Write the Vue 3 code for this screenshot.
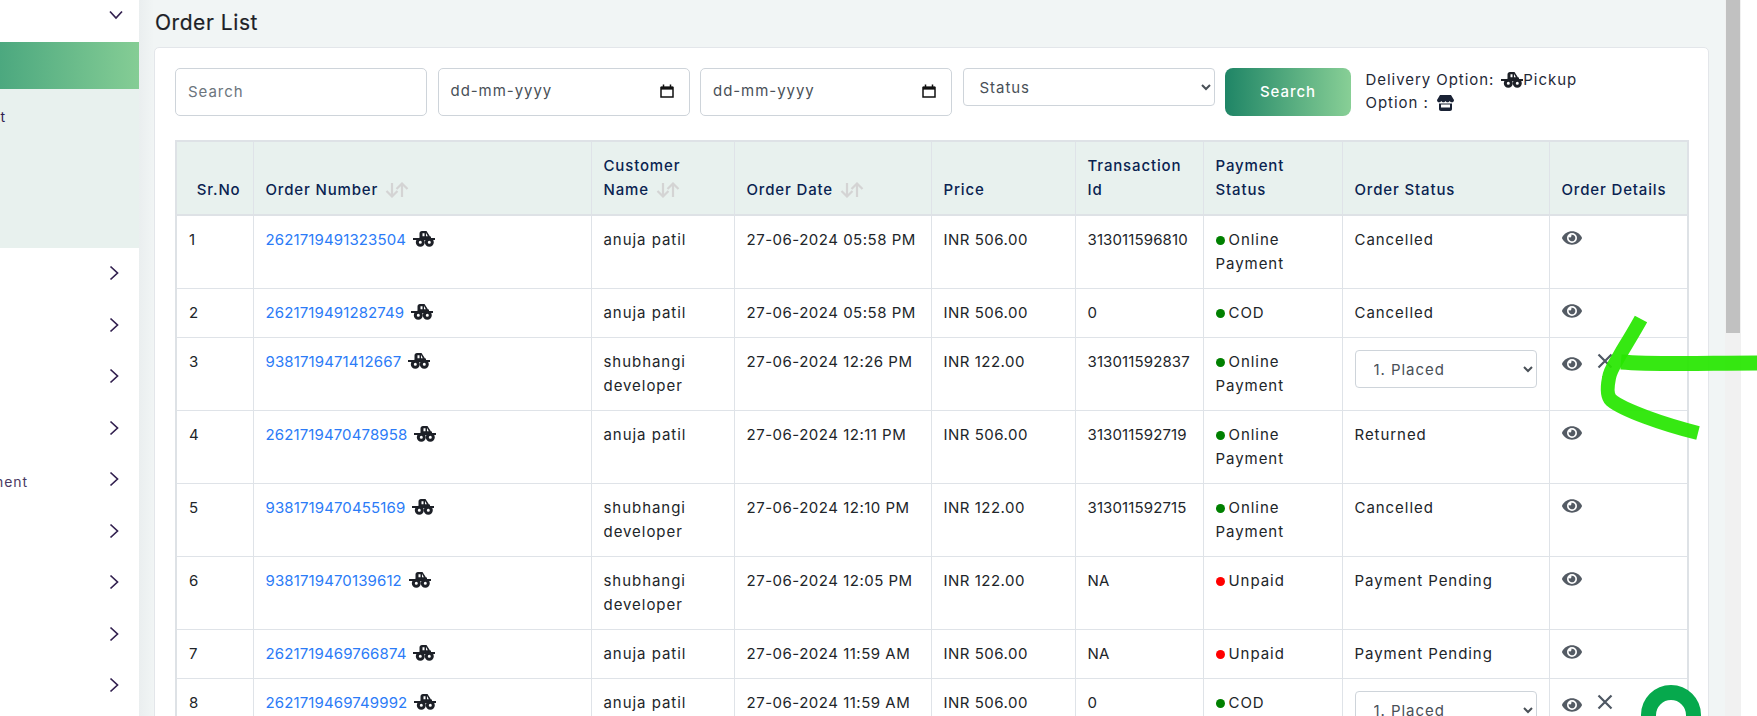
<script setup>
const eye = 'M572.52 241.4C518.29 135.59 410.93 64 288 64S57.68 135.64 3.48 241.41a32.35 32.35 0 0 0 0 29.19C57.71 376.41 165.07 448 288 448s230.32-71.64 284.52-177.41a32.35 32.35 0 0 0 0-29.19zM288 400a144 144 0 1 1 144-144 143.93 143.93 0 0 1-144 144zm0-240a95.31 95.31 0 0 0-25.31 3.79 47.85 47.85 0 0 1-66.9 66.9A95.78 95.78 0 1 0 288 160z'
const menuItems = [
  { label: '' }, { label: '' }, { label: '' }, { label: '' },
  { label: 'Inventory Management' },
  { label: '' }, { label: '' }, { label: '' }, { label: '' }
]
const anuja = ['anuja patil']
const shubh = ['shubhangi', 'developer']
const online = ['Online', 'Payment']
const rows = [
  { no: 1, id: '2621719491323504', name: anuja, date: '27-06-2024 05:58 PM', price: 'INR 506.00', tx: '313011596810', dot: 'green', pay: online, status: 'Cancelled' },
  { no: 2, id: '2621719491282749', name: anuja, date: '27-06-2024 05:58 PM', price: 'INR 506.00', tx: '0', dot: 'green', pay: ['COD'], status: 'Cancelled' },
  { no: 3, id: '9381719471412667', name: shubh, date: '27-06-2024 12:26 PM', price: 'INR 122.00', tx: '313011592837', dot: 'green', pay: online, status: '', edit: true },
  { no: 4, id: '2621719470478958', name: anuja, date: '27-06-2024 12:11 PM', price: 'INR 506.00', tx: '313011592719', dot: 'green', pay: online, status: 'Returned' },
  { no: 5, id: '9381719470455169', name: shubh, date: '27-06-2024 12:10 PM', price: 'INR 122.00', tx: '313011592715', dot: 'green', pay: online, status: 'Cancelled' },
  { no: 6, id: '9381719470139612', name: shubh, date: '27-06-2024 12:05 PM', price: 'INR 122.00', tx: 'NA', dot: 'red', pay: ['Unpaid'], status: 'Payment Pending' },
  { no: 7, id: '2621719469766874', name: anuja, date: '27-06-2024 11:59 AM', price: 'INR 506.00', tx: 'NA', dot: 'red', pay: ['Unpaid'], status: 'Payment Pending' },
  { no: 8, id: '2621719469749992', name: anuja, date: '27-06-2024 11:59 AM', price: 'INR 506.00', tx: '0', dot: 'green', pay: ['COD'], status: '', edit: true }
]
</script>

<template>
  <div class="app">
    <svg width="0" height="0" class="defs">
      <symbol id="truck" viewBox="0 0 22 16">
        <path d="M6.500 7V2.500C6.500 1 7.500 0 9 0H13.500L17 5.500H18V7H6.500Z M9.500 2.200V5.200H11.500V2.200Z M13 2.200V5.200H14.800L13.200 2.200Z" fill="#1d2027" fill-rule="evenodd" />
        <rect x="0" y="7" width="22" height="2" fill="#1d2027" />
        <circle cx="7.300" cy="11.300" r="3" fill="#fff" stroke="#1d2027" stroke-width="3" />
        <circle cx="16.300" cy="11.300" r="3" fill="#fff" stroke="#1d2027" stroke-width="3" />
      </symbol>
      <symbol id="sort" viewBox="0 0 24 16">
        <path d="M7 1V14M1.500 9L7 14.500L12.500 9" fill="none" stroke="#d4d4d4" stroke-width="2.200" />
        <path d="M17 15V2M11.500 7L17 1.500L22.500 7" fill="none" stroke="#d4d4d4" stroke-width="2.200" />
      </symbol>
      <symbol id="eye" viewBox="0 0 576 512"><path :d="eye" fill="#545b64" /></symbol>
    </svg>

    <aside class="sidebar">
      <div class="side-top">
        <svg class="chev-down" width="14" height="10" viewBox="0 0 14 10"><path d="M1 1.500L7 8L13 1.500" fill="none" stroke="#32204f" stroke-width="1.700" /></svg>
      </div>
      <div class="side-active"></div>
      <div class="side-sub"><span class="clip clip-a">Order List</span></div>
      <div v-for="(m, i) in menuItems" :key="i" class="side-item">
        <span v-if="m.label" class="clip clip-b">{{ m.label }}</span>
        <svg class="chev" width="10" height="15" viewBox="0 0 10 15"><path d="M1.500 1L8.500 7.500L1.500 14" fill="none" stroke="#32204f" stroke-width="1.700" /></svg>
      </div>
    </aside>

    <main class="main">
      <h1 class="title">Order List</h1>
      <section class="card">
        <div class="filters">
          <input class="field" type="text" placeholder="Search" />
          <div class="field date"><span>dd-mm-yyyy</span>
            <svg width="14" height="14" viewBox="0 0 14 14"><path d="M1 3.500H13V13H1Z M1 4.500H13" fill="none" stroke="#111" stroke-width="1.500" /><path d="M1 2.500H13V5.500H1Z" fill="#111" /><path d="M3.500 0.500V3M10.500 0.500V3" stroke="#111" stroke-width="1.500" /></svg>
          </div>
          <div class="field date"><span>dd-mm-yyyy</span>
            <svg width="14" height="14" viewBox="0 0 14 14"><path d="M1 3.500H13V13H1Z M1 4.500H13" fill="none" stroke="#111" stroke-width="1.500" /><path d="M1 2.500H13V5.500H1Z" fill="#111" /><path d="M3.500 0.500V3M10.500 0.500V3" stroke="#111" stroke-width="1.500" /></svg>
          </div>
          <select class="status"><option>Status</option></select>
          <button class="search" type="button">Search</button>
          <div class="info">
            <div class="info-line">Delivery Option:<svg class="truck info-truck" width="22" height="16"><use href="#truck" /></svg>Pickup</div>
            <div class="info-line">Option :
              <svg class="store" width="17" height="16" viewBox="0 0 17 16">
                <path d="M3 0H14L17 5C17 6.500 16 7.300 14.900 7.300C13.900 7.300 13.200 6.800 12.700 6C12.200 6.800 11.400 7.300 10.600 7.300C9.700 7.300 9 6.800 8.500 6C8 6.800 7.300 7.300 6.400 7.300C5.600 7.300 4.800 6.800 4.300 6C3.800 6.800 3.100 7.300 2.100 7.300C1 7.300 0 6.500 0 5Z" fill="#1a2235" />
                <path d="M2 8.500H15V14C15 15.200 14.200 16 13 16H4C2.800 16 2 15.200 2 14ZM4 9.500V12.500H13V9.500Z" fill="#1a2235" fill-rule="evenodd" />
              </svg>
            </div>
          </div>
        </div>

        <table class="orders">
          <colgroup>
            <col style="width:77px" /><col style="width:338px" /><col style="width:143px" />
            <col style="width:197px" /><col style="width:144px" /><col style="width:128px" />
            <col style="width:139px" /><col style="width:207px" /><col style="width:139px" />
          </colgroup>
          <thead>
            <tr>
              <th class="sr">Sr.No</th>
              <th>Order Number <svg class="sort" width="24" height="16"><use href="#sort" /></svg></th>
              <th>Customer<br />Name <svg class="sort" width="24" height="16"><use href="#sort" /></svg></th>
              <th>Order Date <svg class="sort" width="24" height="16"><use href="#sort" /></svg></th>
              <th>Price</th>
              <th>Transaction<br />Id</th>
              <th>Payment<br />Status</th>
              <th>Order Status</th>
              <th>Order Details</th>
            </tr>
          </thead>
          <tbody>
            <tr v-for="r in rows" :key="r.no">
              <td class="digits">{{ r.no }}</td>
              <td><a class="link digits">{{ r.id }}</a><svg class="truck" width="22" height="16"><use href="#truck" /></svg></td>
              <td><span v-for="n in r.name" :key="n" class="ln">{{ n }}</span></td>
              <td class="mixed">{{ r.date }}</td>
              <td class="mixed">{{ r.price }}</td>
              <td class="digits">{{ r.tx }}</td>
              <td><i class="dot" :class="r.dot"></i><span v-for="(p, i) in r.pay" :key="p" :class="i ? 'ln' : ''">{{ p }}</span></td>
              <td :class="{ selcell: r.edit }">
                <select v-if="r.edit" class="placed"><option>1. Placed</option></select>
                <template v-else>{{ r.status }}</template>
              </td>
              <td class="actions" :class="{ raised: r.edit }">
                <svg class="eye" width="20" height="18"><use href="#eye" /></svg>
                <svg v-if="r.edit" class="x" width="16" height="16" viewBox="0 0 16 16"><path d="M1.500 1.500L14.500 14.500M14.500 1.500L1.500 14.500" stroke="#4e5763" stroke-width="2.200" fill="none" /></svg>
              </td>
            </tr>
          </tbody>
        </table>
      </section>
    </main>
    <div class="scrollbar"><div class="thumb"></div></div>
    <div class="gutter"></div>

    <svg class="scribble" width="180" height="170" viewBox="0 0 180 170">
      <g fill="none" stroke="#27e600" stroke-width="14" stroke-opacity="0.93">
        <path d="M64 21C58 32 50 45 44 55C38 66 33 72 32 80C30 90 30 98 34 102C46 112 85 126 121 135" />
        <path d="M44 64C80 67 130 65 180 65" stroke-width="15" />
      </g>
    </svg>
    <div class="chat"></div>
  </div>
</template>

<style>
html, body { margin: 0; background: #fff; overflow: hidden; }
</style>

<style scoped>
.app { position: relative; display: flex; width: 1757px; height: 716px; overflow: hidden; font-family: Inter, "Liberation Sans", sans-serif; font-size: 15px; letter-spacing: .95px; line-height: 24px; color: #212529; }
.defs { position: absolute; }
.sidebar { flex: 0 0 139px; background: #fff; overflow: hidden; }
.side-top { height: 42px; position: relative; }
.chev-down { position: absolute; left: 109px; top: 10px; }
.side-active { height: 47px; background: linear-gradient(90deg, #4ca87f, #85cd95); }
.side-sub { height: 159px; background: #e8f1ee; position: relative; color: #32204f; font-size: 14px; }
.side-item { height: 51.5px; position: relative; display: flex; align-items: center; justify-content: flex-end; padding-right: 20px; color: #4a3a63; font-size: 14px; box-sizing: border-box; }
.chev { transform: translateY(-.5px); }
.clip { position: absolute; white-space: nowrap; }
.clip-a { right: 133px; top: 16px; }
.clip-b { right: 111px; top: 16px; }
.main { flex: 0 0 1586px; box-sizing: border-box; background: linear-gradient(90deg, #eaeeef, #f1f5f5 15px); padding: 0 16px 0 15px; overflow: hidden; }
.title { margin: 0; padding-left: 1px; height: 47px; font-size: 21px; font-weight: 400; letter-spacing: .55px; line-height: 45px; color: #1d1f27; -webkit-text-stroke: .2px #1d1f27; }
.card { background: #fff; border: 1px solid #e3e6ea; border-radius: 5px; padding: 20px; height: 900px; }
.filters { display: flex; align-items: flex-start; gap: 10.5px; height: 72px; }
.field { box-sizing: border-box; flex: 0 0 252px; width: 252px; height: 48px; padding: 0 12px 2px; border: 1px solid #ced4da; border-radius: 5px; font: inherit; letter-spacing: inherit; color: #495057; background: #fff; outline: none; }
.field::placeholder { color: #6c757d; }
.date { display: flex; align-items: center; justify-content: space-between; padding-right: 15px; }
.status { box-sizing: border-box; flex: 0 0 252px; height: 38px; padding: 0 12px; border: 1px solid #ced4da; border-radius: 4px; background: #fff; font: inherit; letter-spacing: inherit; color: #495057; }
.search { flex: 0 0 126px; height: 48px; margin-right: 4px; border: 0; border-radius: 8px; background: linear-gradient(90deg, #1f8566, #88cf96); color: #fff; font: inherit; letter-spacing: inherit; font-weight: 500; }
.info { margin-top: 0; line-height: 23px; color: #1f2937; white-space: nowrap; }
.info-line { display: flex; align-items: center; height: 23px; }
.info-truck { margin: 0 0 0 9px; }
.store { margin-left: 8px; }
.orders { border-collapse: collapse; table-layout: fixed; width: 1513px; border: 2px solid #dee2e6; }
.orders th, .orders td { border: 1px solid #dfe3e8; padding: 12px; vertical-align: top; text-align: left; }
.orders th { background: #e8f1ee; color: #0a2351; font-weight: 500; vertical-align: bottom; border-bottom: 2px solid #dee2e6; letter-spacing: .85px; }
.orders th.sr { text-align: right; }
.sort { vertical-align: -3px; margin-left: 2px; }
.digits { letter-spacing: .12px; }
.mixed { letter-spacing: .5px; }
.link { color: #2b7bf7; }
.truck { vertical-align: -2px; margin-left: 7px; }
.ln { display: block; }
.dot { display: inline-block; width: 9px; height: 9px; border-radius: 50%; margin-right: 4px; }
.dot.green { background: #008000; }
.dot.red { background: #ff0000; }
.selcell { padding-top: 12px !important; padding-bottom: 9px !important; }
.placed { display: block; box-sizing: border-box; width: 182px; height: 38px; padding: 0 14px; border: 1px solid #ced4da; border-radius: 4px; background: #fff; font: inherit; letter-spacing: inherit; color: #495057; }
.actions { white-space: nowrap; }
.eye { display: inline-block; vertical-align: top; margin-top: 1px; }
.x { display: inline-block; vertical-align: top; margin-left: 15px; margin-top: 1px; }
.raised .eye { margin-top: 5px; }
.raised .x { margin-top: 3px; }
.scrollbar { flex: 0 0 16px; background: #f1f1f1; }
.thumb { width: 14px; height: 333px; margin-left: 1px; background: #c1c1c1; }
.gutter { flex: 0 0 16px; background: #fff; }
.scribble { position: absolute; left: 1577px; top: 298px; pointer-events: none; }
.chat { position: absolute; left: 1641px; top: 685px; width: 60px; height: 60px; box-sizing: border-box; border: 15px solid #06a94d; border-radius: 50%; background: #fff; }
</style>
